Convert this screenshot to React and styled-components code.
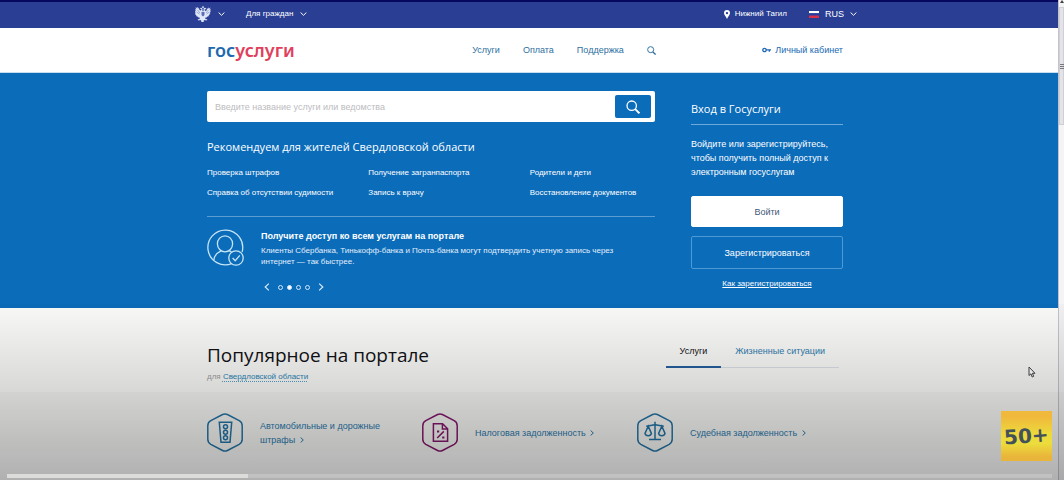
import styled, { createGlobalStyle } from "styled-components";

const GlobalStyle = createGlobalStyle`
  * {
    box-sizing: border-box;
  }
  body {
    margin: 0;
    background: #ffffff;
    font-family: "Liberation Sans", Arial, sans-serif;
    font-size: 9px;
    line-height: 14px;
  }
  a {
    color: inherit;
    text-decoration: none;
  }
  button, input {
    font-family: inherit;
    font-size: inherit;
  }
  h1, h2, h3, p, ul {
    margin: 0;
    padding: 0;
  }
  svg {
    display: block;
    flex: none;
  }
`;

const StyledPage = styled.div`
  display: grid;
  grid-template-columns: minmax(0, 1fr) 6px;
  min-height: 100vh;
  position: relative;
  overflow: hidden;
`;

const StyledContainer = styled.div`
  width: 100%;
  max-width: ${({ $wide }) => ($wide ? 662 : 636)}px;
  margin: 0 auto;
  display: flex;
  align-items: ${({ $align }) => $align || "center"};
  flex-wrap: wrap;
  justify-content: space-between;
`;

const StyledTopBar = styled.div`
  background: #2a3f94;
  border-top: 2px solid #06085f;
  color: #ffffff;
  padding: 0 6px 2px 0;
  height: 28px;
  display: flex;
`;

const StyledGroup = styled.div`
  display: flex;
  align-items: center;
  gap: ${({ $gap }) => $gap}px;
`;

const StyledPlainButton = styled.button`
  display: flex;
  align-items: center;
  gap: ${({ $gap }) => $gap || 0}px;
  padding: 0;
  border: 0;
  background: none;
  color: inherit;
  font-size: ${({ $small }) => ($small ? 8 : 9)}px;
  line-height: 14px;
  cursor: pointer;
`;

const StyledHeader = styled.header`
  background: #ffffff;
  color: #2d6f9f;
  padding: 0 8px 0 0;
  height: 45px;
  display: flex;
  border-bottom: 1px solid #c9dcee;
`;

const StyledLogo = styled.a`
  font-family: "Noto Sans", sans-serif;
  font-weight: 600;
  font-size: 18px;
  line-height: 24px;
  color: #1c69ae;
  span {
    color: #e0405c;
  }
`;

const StyledNav = styled.nav`
  display: flex;
  align-items: center;
  gap: 23px;
  padding-left: 71px;
`;

const StyledIconLink = styled.a`
  display: flex;
  align-items: center;
  gap: 4px;
  color: #2069b4;
`;

const StyledHero = styled.section`
  background: #0b6cba;
  color: #ffffff;
  padding: 18px 8px 17px 0;
`;

const StyledHeroMain = styled.div`
  width: 448px;
  max-width: 100%;
`;

const StyledSearch = styled.form`
  display: flex;
  align-items: center;
  height: 31px;
  padding: 4px;
  background: #ffffff;
  border-radius: 2px;
`;

const StyledSearchInput = styled.input`
  flex: 1;
  min-width: 0;
  border: 0;
  outline: 0;
  padding: 0 4px;
  background: none;
  color: #333333;
  &::placeholder {
    color: #bcbcc0;
    opacity: 1;
  }
`;

const StyledSearchButton = styled.button`
  width: 36px;
  height: 23px;
  border: 0;
  border-radius: 2px;
  padding: 0;
  background: #0b6cba;
  color: #ffffff;
  display: flex;
  align-items: center;
  justify-content: center;
`;

const StyledSubtitle = styled.h2`
  font-family: "Open Sans", sans-serif;
  font-weight: 500;
  font-size: 11px;
  line-height: 16px;
`;

const StyledRecommend = styled.div`
  padding: 17px 0 16px;
  border-bottom: 1px solid #5b9dd3;
`;

const StyledLinks = styled.ul`
  display: grid;
  grid-template-columns: repeat(3, 1fr);
  row-gap: 6px;
  padding-top: 11px;
  list-style: none;
  font-size: 8px;
  white-space: nowrap;
  margin-right: -36px;
`;

const StyledPromo = styled.div`
  display: flex;
  gap: 17px;
  padding-top: 12px;
`;

const StyledPromoTitle = styled.h3`
  font-size: 9px;
  line-height: 14px;
`;

const StyledPromoText = styled.p`
  max-width: 376px;
  font-size: 8px;
  line-height: 11px;
  padding-top: 2px;
  color: #e2eefa;
`;

const StyledPager = styled.div`
  display: flex;
  align-items: center;
  gap: 8px;
  padding: 16px 0 0 3px;
`;

const StyledDots = styled.div`
  display: flex;
  gap: 4px;
`;

const StyledDot = styled.button`
  width: 5px;
  height: 5px;
  padding: 0;
  border: 1px solid #d5e7f6;
  border-radius: 50%;
  background: ${({ $active }) => ($active ? "#ffffff" : "transparent")};
`;

const StyledLogin = styled.aside`
  width: 152px;
  display: flex;
  flex-direction: column;
  padding-top: 10px;
`;

const StyledLoginTitle = styled(StyledSubtitle)`
  padding-bottom: 7px;
  border-bottom: 1px solid #6ea9db;
`;

const StyledLoginText = styled.p`
  padding: 12px 0 17px;
  line-height: 14px;
`;

const StyledLoginButton = styled.button`
  height: ${({ $outline }) => ($outline ? 33 : 31)}px;
  margin-bottom: 9px;
  border-radius: 2px;
  border: 1px solid ${({ $outline }) => ($outline ? "#4d99d6" : "#ffffff")};
  background: ${({ $outline }) => ($outline ? "transparent" : "#ffffff")};
  color: ${({ $outline }) => ($outline ? "#ffffff" : "#3f5878")};
`;

const StyledHelpLink = styled.a`
  align-self: center;
  font-size: 8px;
  line-height: 12px;
  && {
    text-decoration: underline;
  }
`;

const StyledPopular = styled.section`
  padding: 32px 8px 0 0;
  background: #fdfdfb;
`;

const StyledTitle = styled.h1`
  font-family: "Open Sans", sans-serif;
  font-weight: 500;
  font-size: 19px;
  line-height: 30px;
  color: #111116;
`;

const StyledRegion = styled.p`
  font-size: 8px;
  line-height: 14px;
  color: #a2a2a2;
  a {
    color: #2b86b8;
    text-decoration: underline dotted #4fa3cf;
    text-underline-offset: 2px;
  }
`;

const StyledTabs = styled.div`
  display: flex;
  align-items: flex-end;
  padding-right: 4px;
`;

const StyledTab = styled.button`
  height: 28px;
  padding: 5px 14px 0;
  line-height: 12px;
  display: flex;
  border: 0;
  border-bottom: ${({ $active }) => ($active ? "2px solid #25609f" : "1px solid #dde3ea")};
  background: none;
  color: ${({ $active }) => ($active ? "#111116" : "#2f7cb0")};
`;

const StyledServices = styled.div`
  display: grid;
  grid-template-columns: repeat(3, 215px);
  align-items: center;
  margin-right: -9px;
  padding-top: 29px;
`;

const StyledService = styled.a`
  display: flex;
  align-items: center;
  gap: 17px;
  color: #2a7bb0;
  span {
    max-width: 128px;
  }
`;

const StyledScrollbar = styled.div`
  background: #f4f4f6;
  border-left: 1px solid #c4c4cc;
  display: flex;
  flex-direction: column;
  align-items: center;
  gap: 4px;
`;

const StyledThumb = styled.div`
  width: 100%;
  height: 118px;
  background: #e4e4e8;
  border: 1px solid #cfcfd6;
  display: flex;
  align-items: center;
  justify-content: center;
`;

// everything below lies over the page: player controls, badge and pointer
const StyledShade = styled.div`
  position: absolute;
  left: 0;
  right: 0;
  bottom: 0;
  height: 176px;
  pointer-events: none;
  background: linear-gradient(
    rgba(0, 0, 0, 0.02),
    rgba(0, 0, 0, 0.15) 50%,
    rgba(0, 0, 0, 0.17) 50%,
    rgba(0, 0, 0, 0.31)
  );
`;

const StyledPointer = styled.div`
  position: absolute;
  right: 28px;
  bottom: 102px;
`;

const StyledBadge = styled.div`
  position: absolute;
  right: 12px;
  bottom: 19px;
  width: 51px;
  height: 50px;
  background: linear-gradient(#f0b93c 12%, #ecd93c 45%, #ecdc3c 65%, #e9b43a 92%);
  color: #45515a;
  font-family: "DejaVu Sans", sans-serif;
  font-weight: 700;
  font-size: 20px;
  line-height: 24px;
  display: flex;
  align-items: center;
  justify-content: center;
  span {
    transform: rotate(-4deg);
  }
`;

const StyledProgress = styled.div`
  position: absolute;
  left: 7px;
  right: 12px;
  bottom: 2px;
  height: 4px;
  background: rgba(255, 255, 255, 0.2);
`;

const StyledPlayed = styled.div`
  height: 100%;
  background: #dcdcdb;
`;

const StyledSmallArrow = styled.svg`
  display: inline;
  margin-left: 2px;
`;

const links = [
  "Проверка штрафов",
  "Получение загранпаспорта",
  "Родители и дети",
  "Справка об отсутствии судимости",
  "Запись к врачу",
  "Восстановление документов",
];

const Chevron = () => (
  <svg width="7" height="4" viewBox="0 0 7 4" fill="none" stroke="currentColor">
    <path d="M.6.5 3.5 3.3 6.4.5" />
  </svg>
);

const Arrow = ({ left }) => (
  <svg width="6" height="8" viewBox="0 0 6 8" fill="none" stroke="#d8ebfb" strokeWidth="1.2">
    <path d={left ? "M4.8.6 1.2 4l3.6 3.4" : "M1.2.6 4.8 4 1.2 7.4"} />
  </svg>
);

const Search = ({ size, stroke }) => (
  <svg width={size} height={size} viewBox="0 0 14 14" fill="none" stroke="currentColor" strokeWidth={stroke}>
    <circle cx="5.7" cy="5.7" r="4.7" />
    <path d="m9.2 9.2 4.2 4.1" strokeWidth={stroke * 1.4} />
  </svg>
);

const Eagle = () => (
  <svg width="16" height="16" viewBox="0 0 32 32" fill="#dfe7f8">
    <path d="m16 0 2 2-1 2h-2l-1-2z" />
    <path d="M11 4c3-1 4 1 4 4v2l1 1 1-1V8c0-3 1-5 4-4l2 2-4 1 1 3 3-1c1-3 2-5 5-6l-1 3 4-3-2 5 3-2-2 5 2-1-3 5 2 0-4 4 1 1-5 2 0 2-3-1 1 3 4 1-2 2-4-1-2 2 1 3-2-1-1 3-1-3-2 1 1-3-2-2-4 1-2-2 4-1 1-3-3 1 0-2-5-2 1-1-4-4h2L0 9l2 1-2-5 3 2-2-5 4 3-1-3c3 1 4 3 5 6l3 1 1-3-4-1z" />
    <path d="M13 12h6v5c0 2-2 3-3 4-1-1-3-2-3-4z" fill="#5c70b5" />
    <path d="m5 8 5 6M3 12l6 4M27 8l-5 6M29 12l-6 4" stroke="#5366ad" strokeWidth="1" />
  </svg>
);

const Account = () => (
  <svg width="37" height="37" viewBox="0 0 37 37" fill="none" stroke="#c5e5f4" strokeWidth="1.3">
    <path d="M24.8 34.6A17.4 17.4 0 1 1 35.1 23" />
    <ellipse cx="18" cy="14.8" rx="7.6" ry="8" />
    <path d="M6.8 31.2c.4-4.4 2.7-7.2 7.2-9.4M22.2 21.8l2.4 1" />
    <circle cx="29" cy="29" r="7.2" />
    <path d="m25.6 29 2.6 2.7 4.6-5.4" />
  </svg>
);

const Hexagon = ({ color, children }) => (
  <svg width="36" height="39" viewBox="0 0 36 39" fill="none" stroke={color} strokeWidth="1.5">
    <path d="M15.6 1.5q2.4-1.2 4.8 0l11.8 6.2q3 1.7 3 5v13.6q0 3.3-3 5l-11.8 6.2q-2.4 1.2-4.8 0L3.8 31.3q-3-1.7-3-5V12.7q0-3.3 3-5z" />
    {children}
  </svg>
);

const TrafficLight = () => (
  <Hexagon color="#2477aa">
    <path d="M12.3 9.2h12.4L23 29.3h-9z" />
    <circle cx="18.5" cy="13.8" r="2" />
    <circle cx="18.5" cy="19.3" r="2" />
    <circle cx="18.5" cy="24.8" r="2" />
  </Hexagon>
);

const TaxPaper = () => (
  <Hexagon color="#88186f">
    <path d="M11.4 10.8h9.2l5 5v12.4H11.4zM20.4 10.8v5.2h5.2M15.2 25l6.6-6.6" />
    <path d="M15 18.5h2.2M20.2 24.6h2.2" strokeWidth="2" />
  </Hexagon>
);

const Scales = () => (
  <Hexagon color="#2477aa">
    <path d="M18 8.8v17.6M12 26.6h12M9.2 13.2c3-.2 5.2-.8 8.8-1.6 3.6.8 5.8 1.4 8.8 1.6" />
    <path d="M11.2 13.2 8 20.4c.6 3 5.8 3 6.4 0zM24.8 13.2l-3.2 7.2c.6 3 5.8 3 6.4 0z" />
  </Hexagon>
);

const SmallArrow = () => (
  <StyledSmallArrow width="4" height="6" viewBox="0 0 4 6" fill="none" stroke="currentColor">
    <path d="M.6.5 3.3 3 .6 5.5" />
  </StyledSmallArrow>
);

const services = [
  { title: "Автомобильные и дорожные штрафы", icon: <TrafficLight /> },
  { title: "Налоговая задолженность", icon: <TaxPaper /> },
  { title: "Судебная задолженность", icon: <Scales /> },
];

const TopBar = () => (
  <StyledTopBar>
    <StyledContainer $wide>
      <StyledGroup $gap={21}>
        <StyledPlainButton $gap={7} aria-label="Ведомства">
          <Eagle />
          <Chevron />
        </StyledPlainButton>
        <StyledPlainButton $gap={7} $small>
          Для граждан
          <Chevron />
        </StyledPlainButton>
      </StyledGroup>
      <StyledGroup $gap={22}>
        <StyledPlainButton $gap={5} $small>
          <svg width="6" height="9" viewBox="0 0 6 9" fill="#ffffff" fillRule="evenodd">
            <path d="M3 0a3 3 0 0 1 3 3c0 2-2 3.5-3 6-1-2.5-3-4-3-6a3 3 0 0 1 3-3zm0 1.9a1.2 1.2 0 1 0 0 2.4 1.2 1.2 0 0 0 0-2.4z" />
          </svg>
          Нижний Тагил
        </StyledPlainButton>
        <StyledPlainButton $gap={6}>
          <svg width="10" height="7" viewBox="0 0 10 7">
            <path fill="#ffffff" d="M0 0h10v2.3H0z" />
            <path fill="#2340a0" d="M0 2.3h10v2.2H0z" />
            <path fill="#d92f4a" d="M0 4.5h10V7H0z" />
          </svg>
          RUS
          <Chevron />
        </StyledPlainButton>
      </StyledGroup>
    </StyledContainer>
  </StyledTopBar>
);

const Header = () => (
  <StyledHeader>
    <StyledContainer>
      <StyledLogo href="#home">
        гос<span>услуги</span>
      </StyledLogo>
      <StyledNav>
        <a href="#services">Услуги</a>
        <a href="#payment">Оплата</a>
        <a href="#support">Поддержка</a>
        <StyledPlainButton aria-label="Поиск">
          <Search size={9} stroke={1.5} />
        </StyledPlainButton>
      </StyledNav>
      <StyledIconLink href="#account">
        <svg width="9" height="6" viewBox="0 0 9 6" fill="none" stroke="currentColor" strokeWidth="1.3">
          <circle cx="2.5" cy="3" r="1.7" />
          <path d="M4.2 2.8H9M7.3 2.8v2" />
        </svg>
        Личный кабинет
      </StyledIconLink>
    </StyledContainer>
  </StyledHeader>
);

const Hero = () => (
  <StyledHero>
    <StyledContainer $align="flex-start">
      <StyledHeroMain>
        <StyledSearch>
          <StyledSearchInput
            aria-label="Поиск услуги"
            placeholder="Введите название услуги или ведомства"
          />
          <StyledSearchButton type="button" aria-label="Найти">
            <Search size={14} stroke={1.3} />
          </StyledSearchButton>
        </StyledSearch>
        <StyledRecommend>
          <StyledSubtitle>Рекомендуем для жителей Свердловской области</StyledSubtitle>
          <StyledLinks>
            {links.map((link) => (
              <li key={link}>
                <a href="#service">{link}</a>
              </li>
            ))}
          </StyledLinks>
        </StyledRecommend>
        <StyledPromo>
          <Account />
          <div>
            <StyledPromoTitle>Получите доступ ко всем услугам на портале</StyledPromoTitle>
            <StyledPromoText>
              Клиенты Сбербанка, Тинькофф-банка и Почта-банка могут подтвердить учетную запись через
              интернет — так быстрее.
            </StyledPromoText>
            <StyledPager>
              <StyledPlainButton aria-label="Назад">
                <Arrow left />
              </StyledPlainButton>
              <StyledDots>
                {[0, 1, 2, 3].map((index) => (
                  <StyledDot key={index} $active={index === 1} aria-label={`Слайд ${index + 1}`} />
                ))}
              </StyledDots>
              <StyledPlainButton aria-label="Вперёд">
                <Arrow />
              </StyledPlainButton>
            </StyledPager>
          </div>
        </StyledPromo>
      </StyledHeroMain>
      <StyledLogin>
        <StyledLoginTitle>Вход в Госуслуги</StyledLoginTitle>
        <StyledLoginText>
          Войдите или зарегистрируйтесь, чтобы получить полный доступ к электронным госуслугам
        </StyledLoginText>
        <StyledLoginButton>Войти</StyledLoginButton>
        <StyledLoginButton $outline>Зарегистрироваться</StyledLoginButton>
        <StyledHelpLink href="#help">Как зарегистрироваться</StyledHelpLink>
      </StyledLogin>
    </StyledContainer>
  </StyledHero>
);

const Popular = () => (
  <StyledPopular>
    <StyledContainer $align="flex-start">
      <div>
        <StyledTitle>Популярное на портале</StyledTitle>
        <StyledRegion>
          для <a href="#region">Свердловской области</a>
        </StyledRegion>
      </div>
      <StyledTabs role="tablist">
        <StyledTab role="tab" aria-selected="true" $active>
          Услуги
        </StyledTab>
        <StyledTab role="tab" aria-selected="false">
          Жизненные ситуации
        </StyledTab>
      </StyledTabs>
      <StyledServices>
        {services.map(({ title, icon }) => (
          <StyledService href="#service" key={title}>
            {icon}
            <span>
              {title} <SmallArrow />
            </span>
          </StyledService>
        ))}
      </StyledServices>
    </StyledContainer>
  </StyledPopular>
);

const App = () => (
  <StyledPage>
    <GlobalStyle />
    <main>
      <TopBar />
      <Header />
      <Hero />
      <Popular />
    </main>
    <StyledScrollbar>
      <svg width="4" height="3" viewBox="0 0 4 3">
        <path d="M2 0 4 3H0z" fill="#444444" />
      </svg>
      <StyledThumb>
        <svg width="4" height="5" viewBox="0 0 4 5" stroke="#77777c">
          <path d="M0 .5h4M0 2.5h4M0 4.5h4" />
        </svg>
      </StyledThumb>
    </StyledScrollbar>
    <StyledShade />
    <StyledPointer>
      <svg width="8" height="12" viewBox="0 0 8 12" fill="#e6e6e6" stroke="#3c3c3c">
        <path d="M1 1v8.5l2-1.7L4.2 11l1.5-.7-1.3-3H7z" />
      </svg>
    </StyledPointer>
    <StyledBadge>
      <span>50+</span>
    </StyledBadge>
    <StyledProgress>
      <StyledPlayed style={{ width: `${(241 / 1045) * 100}%` }} />
    </StyledProgress>
  </StyledPage>
);

export default App;
